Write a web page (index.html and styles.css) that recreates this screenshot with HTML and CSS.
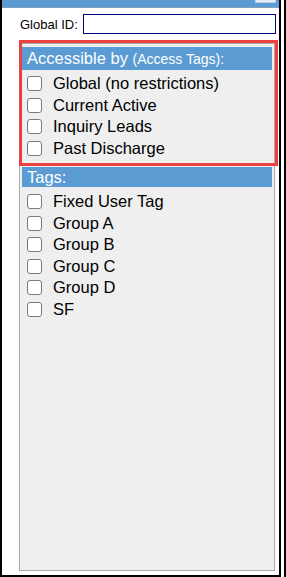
FILE: index.html
```html
<!DOCTYPE html>
<html lang="en">
<head>
    <meta charset="UTF-8">
    <title>Access Tags</title>
    <link rel="stylesheet" href="styles.css">
</head>
<body>

<div class="screen">
    <div class="dialog">
        <div class="titlebar"><span class="title-btn"></span></div>

        <div class="id-row">
            <label for="globalId">Global ID:</label>
            <input type="text" id="globalId" name="globalId">
        </div>

        <div class="panel">
            <div class="head head-access">Accessible by <small>(Access Tags):</small></div>
            <ul class="checks first">
                <li><input type="checkbox" id="t1"><label for="t1">Global (no restrictions)</label></li>
                <li><input type="checkbox" id="t2"><label for="t2">Current Active</label></li>
                <li><input type="checkbox" id="t3"><label for="t3">Inquiry Leads</label></li>
                <li><input type="checkbox" id="t4"><label for="t4">Past Discharge</label></li>
            </ul>

            <div class="head head-tags">Tags:</div>
            <ul class="checks tags">
                <li><input type="checkbox" id="g1"><label for="g1">Fixed User Tag</label></li>
                <li><input type="checkbox" id="g2"><label for="g2">Group A</label></li>
                <li><input type="checkbox" id="g3"><label for="g3">Group B</label></li>
                <li><input type="checkbox" id="g4"><label for="g4">Group C</label></li>
                <li><input type="checkbox" id="g5"><label for="g5">Group D</label></li>
                <li><input type="checkbox" id="g6"><label for="g6">SF</label></li>
            </ul>
        </div>

        <!-- annotation box round the access tags -->
        <div class="highlight"></div>
    </div>
    <div class="backdrop"></div>
</div>

</body>
</html>
```

FILE: styles.css
```css
body {
    margin: 0;
    padding: 0;
    background-color: #ffffff;
    font-family: 'Liberation Sans', Arial, sans-serif;
}

.screen {
    display: flex;
    width: 286px;
    height: 577px;
    box-sizing: border-box;
    border-right: 2px solid #000000;
}

.dialog {
    position: relative;
    width: 281px;
    height: 577px;
    box-sizing: border-box;
    border: 2px solid #000000;
    border-top: none;
    background-color: #ffffff;
}

.backdrop {
    flex: 1;
    background-color: #ffffff;
}

.titlebar {
    position: relative;
    height: 7px;
    background-color: #5b9bd3;
    border-bottom: 1px solid #7f9fbd;
}

.title-btn {
    position: absolute;
    top: 0;
    right: 3px;
    width: 19px;
    height: 2px;
    background-color: #e4edf5;
    border: 1px solid #b9cde0;
    border-top: none;
}

.id-row {
    display: flex;
    align-items: center;
    margin-top: 6px;
    padding-left: 18px;
    height: 20px;
}

.id-row label {
    font-size: 13px;
    color: #000000;
    margin-right: 5px;
}

.id-row input {
    width: 193px;
    height: 20px;
    box-sizing: border-box;
    margin: 0;
    border: 1px solid #000080;
    padding: 0 3px;
    font-size: 13px;
}

.panel {
    margin: 9px 0 0 17px;
    width: 256px;
    height: 528px;
    box-sizing: border-box;
    border: 1px solid #aaaaaa;
    background-color: #efefef;
    padding: 3px 2px;
}

.head {
    background-color: #5b9bd3;
    color: #ffffff;
    padding-left: 5px;
    font-size: 16.5px;
}

.head-access {
    height: 23px;
    line-height: 23px;
}

.head-access small {
    font-size: 14px;
}

.head-tags {
    height: 20px;
    line-height: 20px;
}

.checks {
    list-style: none;
    margin: 3px 0 0 0;
    padding: 0 0 0 5px;
}

.checks.first {
    margin-bottom: 7.6px;
}

.checks.tags {
    margin-top: 4.5px;
}

.checks li {
    display: flex;
    align-items: center;
    height: 21.5px;
    font-size: 16.5px;
    color: #000000;
}

.checks input[type="checkbox"] {
    appearance: none;
    width: 15px;
    height: 15px;
    margin: 0 11px 0 0;
    box-sizing: border-box;
    border: 1px solid #7a7a7a;
    border-radius: 3px;
    background-color: #ffffff;
}

.highlight {
    position: absolute;
    left: 17px;
    top: 40px;
    width: 259px;
    height: 126px;
    box-sizing: border-box;
    border: 3px solid #eb4141;
    pointer-events: none;
}
```
